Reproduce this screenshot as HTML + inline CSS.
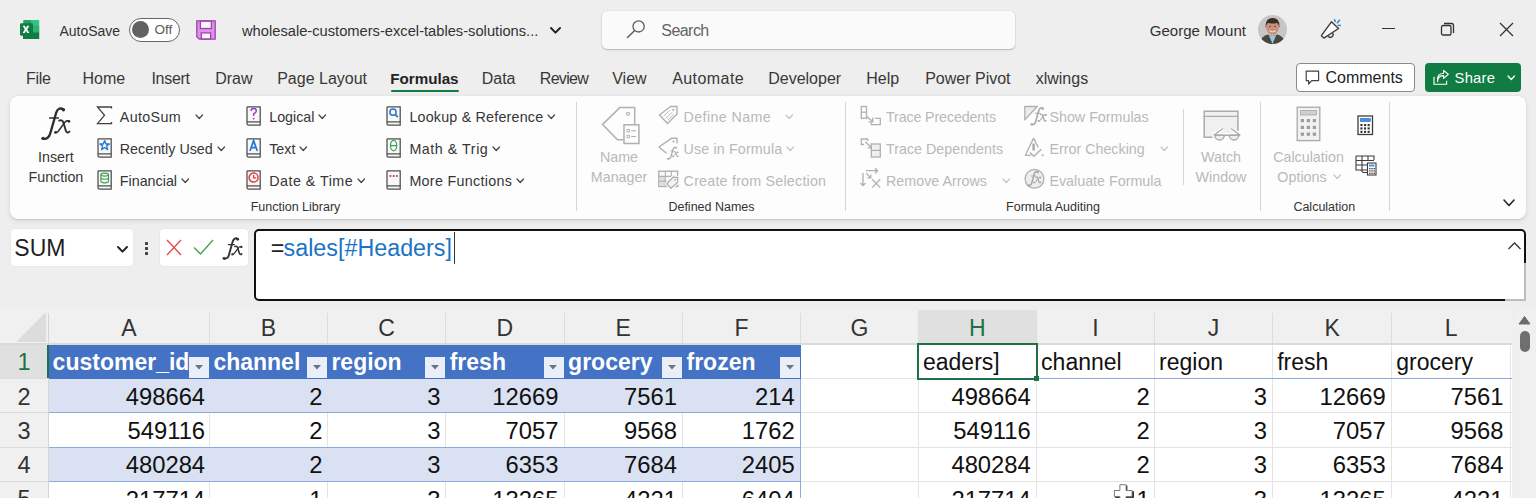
<!DOCTYPE html>
<html><head><meta charset="utf-8"><title>Excel</title>
<style>
html,body{margin:0;padding:0;}
body{width:1536px;height:498px;overflow:hidden;position:relative;background:#eeeeee;font-family:"Liberation Sans", sans-serif;}
.t{position:absolute;white-space:nowrap;}
.b{position:absolute;}
svg.b{overflow:visible;}
</style></head><body>
<svg class="b" style="left:20px;top:20px" width="20" height="20" viewBox="0 0 20 20">
<rect x="3.2" y="0" width="15.9" height="18.9" rx="1" fill="#21a366"/>
<rect x="11" y="0" width="8.1" height="6.3" fill="#33c481"/>
<rect x="3.2" y="12.6" width="15.9" height="6.3" fill="#185c37"/>
<rect x="3.2" y="6.3" width="15.9" height="6.3" fill="#21a366"/>
<rect x="11" y="6.3" width="8.1" height="6.3" fill="#2db374"/>
<rect x="3.2" y="12.6" width="15.9" height="6.3" fill="#107c41"/>
<rect x="0" y="3.3" width="13" height="12.4" rx="1.1" fill="#107c41"/>
<path d="M2.7 5.8 H4.9 L6 8.1 L7.1 5.8 H9.3 L7.2 9.4 L9.4 13 H7.2 L6 10.7 L4.8 13 H2.6 L4.8 9.4 Z" fill="#fff"/>
</svg>
<div class="t" style="top:21.85px;font-size:14px;line-height:18px;color:#333;left:59.4px;">AutoSave</div>
<div class="b" style="left:129px;top:17.5px;width:51px;height:24px;border:1.6px solid #666;border-radius:13px;background:#fff;box-sizing:border-box;"></div>
<div class="b" style="left:132px;top:21px;width:17px;height:17px;border-radius:50%;background:#626262;"></div>
<div class="t" style="top:21.42px;font-size:13.5px;line-height:17px;color:#5a5a5a;left:154.5px;">Off</div>
<svg class="b" style="left:196px;top:20px" width="20" height="20" viewBox="0 0 20 20">
<path d="M0.8 0.8 H19.2 V19.2 H3.3 L0.8 16.8 Z" fill="#d996e2" stroke="#a23fb3" stroke-width="1.3"/>
<rect x="4.4" y="1.2" width="11" height="7.3" fill="#f8f8f8" stroke="#a23fb3" stroke-width="1.3"/>
<rect x="5.3" y="12.9" width="9.3" height="6" fill="#f8f8f8" stroke="#a23fb3" stroke-width="1.3"/>
</svg>
<div class="t" style="top:21.61px;font-size:14.7px;line-height:18px;color:#333;left:242px;">wholesale-customers-excel-tables-solutions...</div>
<svg class="b" style="left:549.5px;top:26.7px" width="11" height="6.6" viewBox="0 0 11 6.6"><path d="M1 1 L5.5 5.6 L10 1" fill="none" stroke="#242424" stroke-width="2" stroke-linecap="round" stroke-linejoin="round"/></svg>
<div class="b" style="left:602px;top:10.5px;width:413px;height:38px;background:#fafafa;border-radius:5px;box-shadow:0 1px 1.5px rgba(0,0,0,0.22), 0 0 0 0.6px rgba(0,0,0,0.06);"></div>
<svg class="b" style="left:626px;top:19px" width="20" height="20" viewBox="0 0 20 20"><circle cx="12.6" cy="7.4" r="5.6" fill="none" stroke="#5a5a5a" stroke-width="1.3"/><path d="M8.6 11.4 L1.5 18.6" stroke="#5a5a5a" stroke-width="1.4" stroke-linecap="round"/></svg>
<div class="t" style="top:21.06px;font-size:16px;line-height:20px;color:#646464;letter-spacing:-0.55px;left:661.3px;">Search</div>
<div class="t" style="top:21.29px;font-size:15.05px;line-height:19px;color:#333;left:1149.8px;">George Mount</div>
<svg class="b" style="left:1258px;top:15px" width="29" height="29" viewBox="0 0 29 29">
<defs><clipPath id="av"><circle cx="14.5" cy="14.5" r="14.5"/></clipPath></defs>
<g clip-path="url(#av)">
<rect width="29" height="29" fill="#c6c6c6"/>
<path d="M1 30 Q3 21 10 19.5 L14.5 21 L19 19.5 Q26 21 28 30 Z" fill="#4b463c"/>
<path d="M10.5 19.5 L14.5 29 L18.5 19.5 Q14.5 22 10.5 19.5 Z" fill="#9cc2dd"/>
<ellipse cx="14.5" cy="12.2" rx="6.4" ry="7.6" fill="#c98f7d"/>
<path d="M7.6 13 Q7 3 14.5 3 Q22.2 3 21.4 13 Q20.5 8.5 19 8 Q14 9 9.8 8 Q8.3 9 7.6 13 Z" fill="#3a2c26"/>
<path d="M11.3 15.8 Q14.5 18 17.7 15.8" stroke="#f2e6e0" stroke-width="1" fill="none"/>
<ellipse cx="12" cy="11.6" rx="0.8" ry="0.5" fill="#4a2f28"/><ellipse cx="17" cy="11.6" rx="0.8" ry="0.5" fill="#4a2f28"/>
</g></svg>
<svg class="b" style="left:1320px;top:19px" width="22" height="21" viewBox="0 0 22 21">
<path d="M1.4 16.7 L11.4 2.8 L18.6 9.5 L3.9 19.1 Z" fill="#fafafa" stroke="#3d3d3d" stroke-width="1.4" stroke-linejoin="round"/>
<path d="M8.2 17.2 A2.4 2.4 0 1 0 12.6 14.2" fill="none" stroke="#3d3d3d" stroke-width="1.3"/>
<path d="M14.6 0.8 L15.2 2.6 M19.5 1.2 L17.4 3.8 M18.3 6.2 L20.2 6.6" stroke="#2a8ad6" stroke-width="1.5" stroke-linecap="round"/>
</svg>
<div class="b" style="left:1382px;top:28px;width:13px;height:1.3px;background:#333;"></div>
<svg class="b" style="left:1440px;top:22px" width="16" height="16" viewBox="0 0 16 16"><rect x="1.5" y="3.5" width="9.5" height="9.5" rx="1.6" fill="none" stroke="#333" stroke-width="1.3"/><path d="M4 1.5 H11.5 Q13.5 1.5 13.5 3.5 V11" fill="none" stroke="#333" stroke-width="1.3"/></svg>
<svg class="b" style="left:1499px;top:22px" width="15" height="15" viewBox="0 0 15 15"><path d="M1 1 L14 14 M14 1 L1 14" stroke="#333" stroke-width="1.3"/></svg>
<div class="t" style="top:68.56px;font-size:16px;line-height:20px;color:#383838;letter-spacing:-0.35px;left:26.099999999999998px;">File</div>
<div class="t" style="top:68.56px;font-size:16px;line-height:20px;color:#383838;left:82.5px;">Home</div>
<div class="t" style="top:68.56px;font-size:16px;line-height:20px;color:#383838;letter-spacing:-0.28px;left:151.39999999999998px;">Insert</div>
<div class="t" style="top:68.56px;font-size:16px;line-height:20px;color:#383838;left:215.2px;">Draw</div>
<div class="t" style="top:68.56px;font-size:16px;line-height:20px;color:#383838;left:277.2px;">Page Layout</div>
<div class="t" style="top:69.33px;font-size:15.2px;line-height:19px;color:#242424;font-weight:700;left:390.20000000000005px;">Formulas</div>
<div class="t" style="top:68.56px;font-size:16px;line-height:20px;color:#383838;left:481.7px;">Data</div>
<div class="t" style="top:68.56px;font-size:16px;line-height:20px;color:#383838;letter-spacing:-0.7px;left:539.8000000000001px;">Review</div>
<div class="t" style="top:68.56px;font-size:16px;line-height:20px;color:#383838;left:612.2px;">View</div>
<div class="t" style="top:68.56px;font-size:16px;line-height:20px;color:#383838;letter-spacing:0.43px;left:672.2px;">Automate</div>
<div class="t" style="top:68.56px;font-size:16px;line-height:20px;color:#383838;left:768.2px;">Developer</div>
<div class="t" style="top:68.56px;font-size:16px;line-height:20px;color:#383838;left:866.2px;">Help</div>
<div class="t" style="top:68.56px;font-size:16px;line-height:20px;color:#383838;left:925.2px;">Power Pivot</div>
<div class="t" style="top:68.56px;font-size:16px;line-height:20px;color:#383838;left:1035.7px;">xlwings</div>
<div class="b" style="left:390.6px;top:89.5px;width:68.6px;height:2.6px;background:#107c41;border-radius:1px;"></div>
<div class="b" style="left:1296px;top:63px;width:119px;height:29px;border:1px solid #8a8a8a;border-radius:4px;background:#fff;box-sizing:border-box;"></div>
<svg class="b" style="left:1305px;top:70px" width="15" height="16" viewBox="0 0 15 16"><path d="M1.2 1.2 H13.6 V10.6 H6.8 L3.6 14 V10.6 H1.2 Z" fill="none" stroke="#424242" stroke-width="1.2" stroke-linejoin="round"/></svg>
<div class="t" style="top:68.06px;font-size:16px;line-height:20px;color:#242424;left:1325.5px;">Comments</div>
<div class="b" style="left:1425px;top:63px;width:96px;height:29px;background:#107c41;border-radius:4px;"></div>
<svg class="b" style="left:1433px;top:70px" width="17" height="16" viewBox="0 0 17 16"><path d="M1 6.8 V14.2 H13.6 V10.8" fill="none" stroke="#fff" stroke-width="1.15"/><path d="M4.6 11.6 C4.6 7.2 7.2 5.6 10.6 5.6 V8.4 L15.3 4.3 L10.6 0.4 V3.2 C6.2 3.3 3.7 6.2 4.6 11.6 Z" fill="none" stroke="#fff" stroke-width="1.15" stroke-linejoin="round"/></svg>
<div class="t" style="top:69.47px;font-size:14.8px;line-height:18px;color:#fff;letter-spacing:0.2px;left:1454.6px;">Share</div>
<svg class="b" style="left:1506.55px;top:75.45px" width="8.5" height="5.5" viewBox="0 0 8.5 5.5"><path d="M1 1 L4.25 4.5 L7.5 1" fill="none" stroke="#fff" stroke-width="1.3" stroke-linecap="round" stroke-linejoin="round"/></svg>
<div class="b" style="left:10px;top:96px;width:1516px;height:123px;background:#fdfdfd;border-radius:8px;box-shadow:0 2px 6px rgba(0,0,0,0.08), 0 0.5px 1.2px rgba(0,0,0,0.12);"></div>
<svg class="b" style="left:40px;top:105px" width="32.0" height="36.0" viewBox="0 0 32.0 36.0"><g transform="scale(1.0)"><g fill="none" stroke="#2e2e2e" stroke-linecap="round">
<path d="M23.3 4.6 C21.2 2.6 17.6 3.2 16.2 7.6 L10.2 28.6 C9 32.6 6.2 34.6 3.2 33.6" stroke-width="2.3"/>
<path d="M9.6 13 H18.4" stroke-width="1.4"/>
<path d="M19.2 15.6 C21.4 14.6 22.8 15.6 23.4 17.8 L25.8 25.4 C26.4 27.6 27.8 28.2 29.4 26.6" stroke-width="1.9"/>
<path d="M28.8 16.2 C27.2 15 25.6 16.2 24 18.4 L19.2 25 C17.8 27 16.8 27.8 15.6 27.4" stroke-width="1.5"/>
</g>
<circle cx="23.4" cy="4.8" r="1.7" fill="#2e2e2e"/><circle cx="3" cy="33.4" r="1.7" fill="#2e2e2e"/>
<circle cx="28.9" cy="16.3" r="1.4" fill="#2e2e2e"/><circle cx="15.5" cy="27.4" r="1.4" fill="#2e2e2e"/></g></svg>
<div class="t" style="top:148.25px;font-size:14.3px;line-height:18px;color:#363636;left:-244.1px;width:600px;text-align:center;">Insert</div>
<div class="t" style="top:168.05px;font-size:14.3px;line-height:18px;color:#363636;left:-244.1px;width:600px;text-align:center;">Function</div>
<svg class="b" style="left:96px;top:106px" width="18" height="19" viewBox="0 0 18 19"><path d="M15.5 2.5 V1 H1.5 L8.5 9.3 L1.5 17.6 H15.5 V16" fill="none" stroke="#424242" stroke-width="1.3" stroke-linejoin="miter"/></svg>
<div class="t" style="top:107.55px;font-size:14.3px;line-height:18px;color:#363636;letter-spacing:0.33px;left:119.8px;">AutoSum</div>
<svg class="b" style="left:195.25px;top:113.75px" width="8.5" height="5.5" viewBox="0 0 8.5 5.5"><path d="M1 1 L4.25 4.5 L7.5 1" fill="none" stroke="#424242" stroke-width="1.2" stroke-linecap="round" stroke-linejoin="round"/></svg>
<div class="t" style="top:139.55px;font-size:14.3px;line-height:18px;color:#363636;left:119.8px;">Recently Used</div>
<svg class="b" style="left:216.55px;top:145.75px" width="8.5" height="5.5" viewBox="0 0 8.5 5.5"><path d="M1 1 L4.25 4.5 L7.5 1" fill="none" stroke="#424242" stroke-width="1.2" stroke-linecap="round" stroke-linejoin="round"/></svg>
<div class="t" style="top:171.55px;font-size:14.3px;line-height:18px;color:#363636;left:119.8px;">Financial</div>
<svg class="b" style="left:180.95px;top:177.75px" width="8.5" height="5.5" viewBox="0 0 8.5 5.5"><path d="M1 1 L4.25 4.5 L7.5 1" fill="none" stroke="#424242" stroke-width="1.2" stroke-linecap="round" stroke-linejoin="round"/></svg>
<svg class="b" style="left:97px;top:138px" width="16" height="20" viewBox="0 0 16 20"><path d="M1.6 0.9 H14.2 V19.1 H2.6 Q1 19.1 1 17.5 V1.5 Q1 0.9 1.6 0.9 Z" fill="#f8f8f8" stroke="#4d4d4d" stroke-width="1.25"/><path d="M1 15.9 H14.2" stroke="#4d4d4d" stroke-width="1.25"/><path d="M7.6 2.6 L8.9 6 H12.4 L9.6 8.1 L10.7 11.6 L7.6 9.5 L4.5 11.6 L5.6 8.1 L2.8 6 H6.3 Z" fill="none" stroke="#1e7ad6" stroke-width="1.3" stroke-linejoin="round"/></svg>
<svg class="b" style="left:97px;top:170px" width="16" height="20" viewBox="0 0 16 20"><path d="M1.6 0.9 H14.2 V19.1 H2.6 Q1 19.1 1 17.5 V1.5 Q1 0.9 1.6 0.9 Z" fill="#f8f8f8" stroke="#4d4d4d" stroke-width="1.25"/><path d="M1 15.9 H14.2" stroke="#4d4d4d" stroke-width="1.25"/><ellipse cx="7.7" cy="4.6" rx="3.8" ry="1.5" fill="none" stroke="#3a9e4f" stroke-width="1.1"/><path d="M3.9 4.6 V11.8 Q7.7 14 11.5 11.8 V4.6 M3.9 8.2 Q7.7 10.3 11.5 8.2" fill="none" stroke="#3a9e4f" stroke-width="1.1"/></svg>
<svg class="b" style="left:246px;top:106px" width="16" height="20" viewBox="0 0 16 20"><path d="M1.6 0.9 H14.2 V19.1 H2.6 Q1 19.1 1 17.5 V1.5 Q1 0.9 1.6 0.9 Z" fill="#f8f8f8" stroke="#4d4d4d" stroke-width="1.25"/><path d="M1 15.9 H14.2" stroke="#4d4d4d" stroke-width="1.25"/><path d="M5 5 Q5 2.4 7.6 2.4 Q10.3 2.4 10.3 4.8 Q10.3 6.6 7.6 7.9 V10" fill="none" stroke="#a53ec4" stroke-width="1.5"/><circle cx="7.6" cy="12.6" r="0.95" fill="#a53ec4"/></svg>
<svg class="b" style="left:246px;top:138px" width="16" height="20" viewBox="0 0 16 20"><path d="M1.6 0.9 H14.2 V19.1 H2.6 Q1 19.1 1 17.5 V1.5 Q1 0.9 1.6 0.9 Z" fill="#f8f8f8" stroke="#4d4d4d" stroke-width="1.25"/><path d="M1 15.9 H14.2" stroke="#4d4d4d" stroke-width="1.25"/><path d="M3.9 13 L7.6 2.6 L11.3 13 M5.2 9.6 H10" fill="none" stroke="#1e7ad6" stroke-width="1.7"/></svg>
<svg class="b" style="left:246px;top:170px" width="16" height="20" viewBox="0 0 16 20"><path d="M1.6 0.9 H14.2 V19.1 H2.6 Q1 19.1 1 17.5 V1.5 Q1 0.9 1.6 0.9 Z" fill="#f8f8f8" stroke="#4d4d4d" stroke-width="1.25"/><path d="M1 15.9 H14.2" stroke="#4d4d4d" stroke-width="1.25"/><circle cx="7.6" cy="7.6" r="4.5" fill="none" stroke="#e03b3b" stroke-width="1.5"/><path d="M7.6 4.9 V7.8 H10.2" fill="none" stroke="#e03b3b" stroke-width="1.3"/></svg>
<div class="t" style="top:107.55px;font-size:14.3px;line-height:18px;color:#363636;left:269.2px;">Logical</div>
<svg class="b" style="left:318.15px;top:113.75px" width="8.5" height="5.5" viewBox="0 0 8.5 5.5"><path d="M1 1 L4.25 4.5 L7.5 1" fill="none" stroke="#424242" stroke-width="1.2" stroke-linecap="round" stroke-linejoin="round"/></svg>
<div class="t" style="top:139.55px;font-size:14.3px;line-height:18px;color:#363636;left:269.2px;">Text</div>
<svg class="b" style="left:299.05px;top:145.75px" width="8.5" height="5.5" viewBox="0 0 8.5 5.5"><path d="M1 1 L4.25 4.5 L7.5 1" fill="none" stroke="#424242" stroke-width="1.2" stroke-linecap="round" stroke-linejoin="round"/></svg>
<div class="t" style="top:171.55px;font-size:14.3px;line-height:18px;color:#363636;letter-spacing:0.48px;left:269.2px;">Date &amp; Time</div>
<svg class="b" style="left:356.65px;top:177.75px" width="8.5" height="5.5" viewBox="0 0 8.5 5.5"><path d="M1 1 L4.25 4.5 L7.5 1" fill="none" stroke="#424242" stroke-width="1.2" stroke-linecap="round" stroke-linejoin="round"/></svg>
<svg class="b" style="left:386px;top:106px" width="16" height="20" viewBox="0 0 16 20"><path d="M1.6 0.9 H14.2 V19.1 H2.6 Q1 19.1 1 17.5 V1.5 Q1 0.9 1.6 0.9 Z" fill="#f8f8f8" stroke="#4d4d4d" stroke-width="1.25"/><path d="M1 15.9 H14.2" stroke="#4d4d4d" stroke-width="1.25"/><circle cx="7" cy="6.2" r="3.1" fill="none" stroke="#1e7ad6" stroke-width="1.5"/><path d="M9.3 8.5 L11.8 11.2" stroke="#1e7ad6" stroke-width="1.8"/></svg>
<svg class="b" style="left:386px;top:138px" width="16" height="20" viewBox="0 0 16 20"><path d="M1.6 0.9 H14.2 V19.1 H2.6 Q1 19.1 1 17.5 V1.5 Q1 0.9 1.6 0.9 Z" fill="#f8f8f8" stroke="#4d4d4d" stroke-width="1.25"/><path d="M1 15.9 H14.2" stroke="#4d4d4d" stroke-width="1.25"/><ellipse cx="7.6" cy="7.6" rx="3.1" ry="5.2" fill="none" stroke="#3a9e4f" stroke-width="1.2"/><path d="M4.5 7.6 H10.7" stroke="#3a9e4f" stroke-width="1.2"/></svg>
<svg class="b" style="left:386px;top:170px" width="16" height="20" viewBox="0 0 16 20"><path d="M1.6 0.9 H14.2 V19.1 H2.6 Q1 19.1 1 17.5 V1.5 Q1 0.9 1.6 0.9 Z" fill="#f8f8f8" stroke="#4d4d4d" stroke-width="1.25"/><path d="M1 15.9 H14.2" stroke="#4d4d4d" stroke-width="1.25"/><path d="M3.6 6 H5.3 M6.8 6 H8.5 M10 6 H11.7" stroke="#e03b3b" stroke-width="1.8"/></svg>
<div class="t" style="top:107.55px;font-size:14.3px;line-height:18px;color:#363636;letter-spacing:0.2px;left:409.4px;">Lookup &amp; Reference</div>
<svg class="b" style="left:547.25px;top:113.75px" width="8.5" height="5.5" viewBox="0 0 8.5 5.5"><path d="M1 1 L4.25 4.5 L7.5 1" fill="none" stroke="#424242" stroke-width="1.2" stroke-linecap="round" stroke-linejoin="round"/></svg>
<div class="t" style="top:139.55px;font-size:14.3px;line-height:18px;color:#363636;letter-spacing:0.53px;left:409.4px;">Math &amp; Trig</div>
<svg class="b" style="left:491.75px;top:145.75px" width="8.5" height="5.5" viewBox="0 0 8.5 5.5"><path d="M1 1 L4.25 4.5 L7.5 1" fill="none" stroke="#424242" stroke-width="1.2" stroke-linecap="round" stroke-linejoin="round"/></svg>
<div class="t" style="top:171.55px;font-size:14.3px;line-height:18px;color:#363636;letter-spacing:0.31px;left:409.4px;">More Functions</div>
<svg class="b" style="left:515.95px;top:177.75px" width="8.5" height="5.5" viewBox="0 0 8.5 5.5"><path d="M1 1 L4.25 4.5 L7.5 1" fill="none" stroke="#424242" stroke-width="1.2" stroke-linecap="round" stroke-linejoin="round"/></svg>
<div class="t" style="top:198.57px;font-size:12.5px;line-height:16px;color:#333;left:250.7px;">Function Library</div>
<div class="b" style="left:576px;top:102px;width:1px;height:109px;background:#d6d6d6;"></div>
<svg class="b" style="left:601px;top:106px" width="40" height="40" viewBox="0 0 40 40"><path d="M23 33.7 H16.5 L1.6 18.4 L18.8 1.6 H33.7 V18.6" fill="none" stroke="#b0b0b0" stroke-width="1.5" stroke-linejoin="round"/>
<circle cx="27" cy="7.7" r="1.5" fill="none" stroke="#b0b0b0" stroke-width="1.1"/>
<rect x="23" y="18.8" width="14.9" height="18.7" fill="#fdfdfd" stroke="#b0b0b0" stroke-width="1.5"/>
<rect x="26" y="23.5" width="2.4" height="2.4" fill="none" stroke="#b0b0b0" stroke-width="0.9"/><rect x="26" y="29.3" width="2.4" height="2.4" fill="none" stroke="#b0b0b0" stroke-width="0.9"/>
<path d="M30.2 24.7 H35 M30.2 30.5 H35" stroke="#b0b0b0" stroke-width="1.1"/></svg>
<div class="t" style="top:148.25px;font-size:14.3px;line-height:18px;color:#b9b9b9;left:319px;width:600px;text-align:center;">Name</div>
<div class="t" style="top:168.05px;font-size:14.3px;line-height:18px;color:#b9b9b9;left:319px;width:600px;text-align:center;">Manager</div>
<svg class="b" style="left:658px;top:105px" width="22" height="22" viewBox="0 0 22 22"><path d="M1.5 10 L12.5 1.5 H19 V9 L9.5 18.5 Z" fill="none" stroke="#b0b0b0" stroke-width="1.4" stroke-linejoin="round"/>
<circle cx="15.3" cy="4.8" r="1.1" fill="#b0b0b0"/>
<path d="M5.5 11.3 L12 5.2 M7.6 13.3 L14.4 7.3 M9.7 15.2 L15.6 9.6" stroke="#bdbdbd" stroke-width="1"/></svg>
<svg class="b" style="left:658px;top:137px" width="22" height="22" viewBox="0 0 22 22"><path d="M19 6.5 V1.2 H13.8 L0.9 10 L8.5 16.2" fill="none" stroke="#b0b0b0" stroke-width="1.4" stroke-linejoin="round"/>
<circle cx="15.5" cy="4.6" r="1.1" fill="#b0b0b0"/></svg>
<svg class="b" style="left:666.6px;top:145.6px" width="12.16" height="13.68" viewBox="0 0 12.16 13.68"><g transform="scale(0.38)"><g fill="none" stroke="#a9a9a9" stroke-linecap="round">
<path d="M23.3 4.6 C21.2 2.6 17.6 3.2 16.2 7.6 L10.2 28.6 C9 32.6 6.2 34.6 3.2 33.6" stroke-width="3.4499999999999997"/>
<path d="M9.6 13 H18.4" stroke-width="2.0999999999999996"/>
<path d="M19.2 15.6 C21.4 14.6 22.8 15.6 23.4 17.8 L25.8 25.4 C26.4 27.6 27.8 28.2 29.4 26.6" stroke-width="2.8499999999999996"/>
<path d="M28.8 16.2 C27.2 15 25.6 16.2 24 18.4 L19.2 25 C17.8 27 16.8 27.8 15.6 27.4" stroke-width="2.25"/>
</g>
<circle cx="23.4" cy="4.8" r="2.55" fill="#a9a9a9"/><circle cx="3" cy="33.4" r="2.55" fill="#a9a9a9"/>
<circle cx="28.9" cy="16.3" r="2.0999999999999996" fill="#a9a9a9"/><circle cx="15.5" cy="27.4" r="2.0999999999999996" fill="#a9a9a9"/></g></svg>
<svg class="b" style="left:658px;top:169px" width="22" height="22" viewBox="0 0 22 22"><rect x="0.8" y="2.2" width="18.8" height="15.3" fill="#fafafa" stroke="#b0b0b0" stroke-width="1.4"/>
<rect x="1.4" y="7.8" width="5.6" height="9.2" fill="#dedede"/>
<path d="M7.3 2.2 V17.5 M13.3 2.2 V17.5 M0.8 7.4 H19.6 M0.8 12.3 H19.6" stroke="#b0b0b0" stroke-width="1.1"/>
<path d="M8.7 14.7 L14.9 8.2 L19.8 8.5 L19.5 13.4 L13 19.3 Z" fill="#f4f4f4" stroke="#fdfdfd" stroke-width="3.5" stroke-linejoin="round"/>
<path d="M8.7 14.7 L14.9 8.2 L19.8 8.5 L19.5 13.4 L13 19.3 Z" fill="#f4f4f4" stroke="#b0b0b0" stroke-width="1.3" stroke-linejoin="round"/>
<circle cx="17" cy="10.8" r="0.9" fill="#b0b0b0"/></svg>
<div class="t" style="top:107.55px;font-size:14.3px;line-height:18px;color:#b9b9b9;letter-spacing:0.37px;left:683.6px;">Define Name</div>
<svg class="b" style="left:785.45px;top:113.75px" width="8.5" height="5.5" viewBox="0 0 8.5 5.5"><path d="M1 1 L4.25 4.5 L7.5 1" fill="none" stroke="#c4c4c4" stroke-width="1.2" stroke-linecap="round" stroke-linejoin="round"/></svg>
<div class="t" style="top:139.55px;font-size:14.3px;line-height:18px;color:#b9b9b9;letter-spacing:0.13px;left:683.6px;">Use in Formula</div>
<svg class="b" style="left:785.95px;top:145.75px" width="8.5" height="5.5" viewBox="0 0 8.5 5.5"><path d="M1 1 L4.25 4.5 L7.5 1" fill="none" stroke="#c4c4c4" stroke-width="1.2" stroke-linecap="round" stroke-linejoin="round"/></svg>
<div class="t" style="top:171.55px;font-size:14.3px;line-height:18px;color:#b9b9b9;letter-spacing:0.21px;left:683.6px;">Create from Selection</div>
<div class="t" style="top:198.57px;font-size:12.5px;line-height:16px;color:#333;left:411.5px;width:600px;text-align:center;">Defined Names</div>
<div class="b" style="left:845px;top:102px;width:1px;height:109px;background:#d6d6d6;"></div>
<svg class="b" style="left:859px;top:105px" width="24" height="22" viewBox="0 0 24 22"><rect x="2.3" y="1.5" width="5.2" height="11.8" fill="none" stroke="#b0b0b0" stroke-width="1.3"/><path d="M2.3 7.2 H7.5" stroke="#b0b0b0" stroke-width="1.2"/>
<path d="M7.5 11.2 L13.6 16.6 M13.8 12.6 V16.8 H9.6" fill="none" stroke="#b0b0b0" stroke-width="1.3"/>
<path d="M16 13.3 H21.3 V19.6 H12.3 V17.6" fill="none" stroke="#b0b0b0" stroke-width="1.3"/></svg>
<svg class="b" style="left:859px;top:137px" width="24" height="22" viewBox="0 0 24 22"><path d="M5 7.5 H2.3 V2 H8.6 V4" fill="none" stroke="#b0b0b0" stroke-width="1.3"/>
<path d="M6.3 4.8 L12.6 10.8 M12.8 6.6 V10.9 H8.6" fill="none" stroke="#b0b0b0" stroke-width="1.3"/>
<rect x="12.3" y="7" width="9" height="13" fill="#f0f0f0" stroke="#b0b0b0" stroke-width="1.3"/><path d="M12.3 13.4 H21.3" stroke="#b0b0b0" stroke-width="1.2"/></svg>
<svg class="b" style="left:859px;top:167px" width="24" height="24" viewBox="0 0 24 24"><path d="M4 6 V18.6 M1.5 16 L4 18.6 L6.5 16" fill="none" stroke="#b0b0b0" stroke-width="1.3"/>
<path d="M7 3.7 H18.6 M16 1.2 L18.6 3.7 L16 6.2" fill="none" stroke="#b0b0b0" stroke-width="1.3"/>
<path d="M7.2 6.2 L11.8 10.8 M11.8 7.4 V10.9 H8.4" fill="none" stroke="#b0b0b0" stroke-width="1.2"/>
<path d="M13.2 12.2 L21.2 20.6 M21.2 12.2 L13.2 20.6" stroke="#b0b0b0" stroke-width="1.3"/></svg>
<div class="t" style="top:107.55px;font-size:14.3px;line-height:18px;color:#b9b9b9;letter-spacing:-0.15px;left:886px;">Trace Precedents</div>
<div class="t" style="top:139.55px;font-size:14.3px;line-height:18px;color:#b9b9b9;left:886px;">Trace Dependents</div>
<div class="t" style="top:171.55px;font-size:14.3px;line-height:18px;color:#b9b9b9;left:886px;">Remove Arrows</div>
<svg class="b" style="left:1001.95px;top:177.75px" width="8.5" height="5.5" viewBox="0 0 8.5 5.5"><path d="M1 1 L4.25 4.5 L7.5 1" fill="none" stroke="#c4c4c4" stroke-width="1.2" stroke-linecap="round" stroke-linejoin="round"/></svg>
<svg class="b" style="left:1024px;top:105px" width="22" height="22" viewBox="0 0 22 22"><path d="M0.8 14.8 V1.5 H13.3 Z" fill="#ececec" stroke="#b0b0b0" stroke-width="1.3" stroke-linejoin="round"/></svg>
<svg class="b" style="left:1029.7px;top:105.8px" width="17.6" height="19.8" viewBox="0 0 17.6 19.8"><g transform="scale(0.55)"><g fill="none" stroke="#a9a9a9" stroke-linecap="round">
<path d="M23.3 4.6 C21.2 2.6 17.6 3.2 16.2 7.6 L10.2 28.6 C9 32.6 6.2 34.6 3.2 33.6" stroke-width="2.9899999999999998"/>
<path d="M9.6 13 H18.4" stroke-width="1.8199999999999998"/>
<path d="M19.2 15.6 C21.4 14.6 22.8 15.6 23.4 17.8 L25.8 25.4 C26.4 27.6 27.8 28.2 29.4 26.6" stroke-width="2.4699999999999998"/>
<path d="M28.8 16.2 C27.2 15 25.6 16.2 24 18.4 L19.2 25 C17.8 27 16.8 27.8 15.6 27.4" stroke-width="1.9500000000000002"/>
</g>
<circle cx="23.4" cy="4.8" r="2.21" fill="#a9a9a9"/><circle cx="3" cy="33.4" r="2.21" fill="#a9a9a9"/>
<circle cx="28.9" cy="16.3" r="1.8199999999999998" fill="#a9a9a9"/><circle cx="15.5" cy="27.4" r="1.8199999999999998" fill="#a9a9a9"/></g></svg>
<svg class="b" style="left:1024px;top:136px" width="22" height="23" viewBox="0 0 22 23"><path d="M9.6 2.1 L1.4 19.3 H7 M9.6 2.1 L14.2 11.5" fill="none" stroke="#b0b0b0" stroke-width="1.3" stroke-linejoin="round"/><path d="M9.6 7.5 V14.5" stroke="#a8a8a8" stroke-width="2.4"/><path d="M6 16.6 L9.8 20.3 L17.4 13.2" fill="none" stroke="#b0b0b0" stroke-width="1.4"/><circle cx="18.6" cy="19.2" r="1" fill="#b0b0b0"/></svg>
<svg class="b" style="left:1024px;top:168px" width="22" height="22" viewBox="0 0 22 22"><circle cx="10.5" cy="10.8" r="9.4" fill="#ededed" stroke="#b0b0b0" stroke-width="1.3"/></svg>
<svg class="b" style="left:1027.4px;top:170px" width="14.72" height="16.560000000000002" viewBox="0 0 14.72 16.560000000000002"><g transform="scale(0.46)"><g fill="none" stroke="#a6a6a6" stroke-linecap="round">
<path d="M23.3 4.6 C21.2 2.6 17.6 3.2 16.2 7.6 L10.2 28.6 C9 32.6 6.2 34.6 3.2 33.6" stroke-width="3.2199999999999998"/>
<path d="M9.6 13 H18.4" stroke-width="1.9599999999999997"/>
<path d="M19.2 15.6 C21.4 14.6 22.8 15.6 23.4 17.8 L25.8 25.4 C26.4 27.6 27.8 28.2 29.4 26.6" stroke-width="2.6599999999999997"/>
<path d="M28.8 16.2 C27.2 15 25.6 16.2 24 18.4 L19.2 25 C17.8 27 16.8 27.8 15.6 27.4" stroke-width="2.0999999999999996"/>
</g>
<circle cx="23.4" cy="4.8" r="2.38" fill="#a6a6a6"/><circle cx="3" cy="33.4" r="2.38" fill="#a6a6a6"/>
<circle cx="28.9" cy="16.3" r="1.9599999999999997" fill="#a6a6a6"/><circle cx="15.5" cy="27.4" r="1.9599999999999997" fill="#a6a6a6"/></g></svg>
<div class="t" style="top:107.55px;font-size:14.3px;line-height:18px;color:#b9b9b9;left:1049.4px;">Show Formulas</div>
<div class="t" style="top:139.55px;font-size:14.3px;line-height:18px;color:#b9b9b9;left:1049.4px;">Error Checking</div>
<svg class="b" style="left:1160.25px;top:145.75px" width="8.5" height="5.5" viewBox="0 0 8.5 5.5"><path d="M1 1 L4.25 4.5 L7.5 1" fill="none" stroke="#c4c4c4" stroke-width="1.2" stroke-linecap="round" stroke-linejoin="round"/></svg>
<div class="t" style="top:171.55px;font-size:14.3px;line-height:18px;color:#b9b9b9;left:1049.4px;">Evaluate Formula</div>
<div class="t" style="top:198.57px;font-size:12.5px;line-height:16px;color:#333;left:753px;width:600px;text-align:center;">Formula Auditing</div>
<div class="b" style="left:1183px;top:109px;width:1px;height:76px;background:#d6d6d6;"></div>
<svg class="b" style="left:1203px;top:110px" width="40" height="36" viewBox="0 0 40 36"><rect x="1.2" y="1.2" width="33.7" height="26" fill="#f0f0f0"/>
<path d="M9.3 27.2 H1.2 V1.2 H34.9 V20.9" fill="none" stroke="#ababab" stroke-width="1.5"/>
<path d="M1.2 6.3 H34.9" stroke="#ababab" stroke-width="1.3"/>
<g fill="#f2f2f2" stroke="#fdfdfd" stroke-width="4" stroke-linejoin="round">
<path d="M10.8 25.2 H37.3 M10.8 25.2 L20 18.5 M28 18.5 L37.3 25.2"/>
<path d="M11.7 25.2 A4.85 4.85 0 0 0 21.4 25.2 Z M26.2 25.2 A4.8 4.8 0 0 0 35.8 25.2 Z"/>
</g>
<g fill="#eeeeee" stroke="#ababab" stroke-width="1.4" stroke-linejoin="round">
<path d="M11.7 25.2 A4.85 4.85 0 0 0 21.4 25.2 Z M26.2 25.2 A4.8 4.8 0 0 0 35.8 25.2 Z"/>
<path d="M10.8 25.2 H37.3 M10.8 25.2 L20 18.5 M28 18.5 L37.3 25.2" fill="none"/>
</g></svg>
<div class="t" style="top:148.25px;font-size:14.3px;line-height:18px;color:#b9b9b9;left:921px;width:600px;text-align:center;">Watch</div>
<div class="t" style="top:168.05px;font-size:14.3px;line-height:18px;color:#b9b9b9;left:921px;width:600px;text-align:center;">Window</div>
<div class="b" style="left:1259.5px;top:102px;width:1px;height:109px;background:#d6d6d6;"></div>
<svg class="b" style="left:1296px;top:106px" width="26" height="36" viewBox="0 0 26 36"><rect x="1.2" y="1.2" width="22.6" height="33.4" fill="#f1f1f1" stroke="#a9a9a9" stroke-width="1.3"/>
<rect x="4.5" y="4.5" width="16" height="4.5" fill="#cfcfcf" stroke="#a9a9a9" stroke-width="0.8"/>
<rect x="4.8" y="13.0" width="3.2" height="3.2" fill="#9d9d9d"/><rect x="10.8" y="13.0" width="3.2" height="3.2" fill="#9d9d9d"/><rect x="16.8" y="13.0" width="3.2" height="3.2" fill="#9d9d9d"/><rect x="4.8" y="19.8" width="3.2" height="3.2" fill="#9d9d9d"/><rect x="10.8" y="19.8" width="3.2" height="3.2" fill="#9d9d9d"/><rect x="16.8" y="19.8" width="3.2" height="3.2" fill="#9d9d9d"/><rect x="4.8" y="26.6" width="3.2" height="3.2" fill="#9d9d9d"/><rect x="10.8" y="26.6" width="3.2" height="3.2" fill="#9d9d9d"/><rect x="16.8" y="26.6" width="3.2" height="3.2" fill="#9d9d9d"/></svg>
<div class="t" style="top:148.25px;font-size:14.3px;line-height:18px;color:#b9b9b9;left:1008.5px;width:600px;text-align:center;">Calculation</div>
<div class="t" style="top:168.05px;font-size:14.3px;line-height:18px;color:#b9b9b9;left:1002px;width:600px;text-align:center;">Options</div>
<svg class="b" style="left:1332.95px;top:174.25px" width="8.5" height="5.5" viewBox="0 0 8.5 5.5"><path d="M1 1 L4.25 4.5 L7.5 1" fill="none" stroke="#c4c4c4" stroke-width="1.2" stroke-linecap="round" stroke-linejoin="round"/></svg>
<svg class="b" style="left:1357px;top:115px" width="17" height="21" viewBox="0 0 17 21"><rect x="1" y="1" width="14.5" height="18.5" fill="#fff" stroke="#3d3d3d" stroke-width="1.3"/>
<rect x="3.3" y="3.3" width="10" height="3.3" fill="#4a90e2" stroke="#2f6fb8" stroke-width="0.6"/>
<rect x="3.4" y="9.0" width="2.1" height="2.1" fill="#333"/><rect x="7.0" y="9.0" width="2.1" height="2.1" fill="#333"/><rect x="10.6" y="9.0" width="2.1" height="2.1" fill="#333"/><rect x="3.4" y="12.4" width="2.1" height="2.1" fill="#333"/><rect x="7.0" y="12.4" width="2.1" height="2.1" fill="#333"/><rect x="10.6" y="12.4" width="2.1" height="2.1" fill="#333"/><rect x="3.4" y="15.8" width="2.1" height="2.1" fill="#333"/><rect x="7.0" y="15.8" width="2.1" height="2.1" fill="#333"/><rect x="10.6" y="15.8" width="2.1" height="2.1" fill="#333"/></svg>
<svg class="b" style="left:1355px;top:155px" width="22" height="21" viewBox="0 0 22 21"><path d="M1 1 H19 V5 M1 1 V15 H6 L8 17.5 H12 M1 5.5 H19 M1 10 H12 M1 15 H12 M7 1 V15 M13 1 V5.5" fill="none" stroke="#3d3d3d" stroke-width="1.1"/>
<rect x="12.5" y="8" width="8.5" height="12" fill="#fff" stroke="#3d3d3d" stroke-width="1.1"/>
<rect x="14" y="9.5" width="5.5" height="2" fill="#4a90e2"/>
<rect x="14.2" y="13.0" width="1.3" height="1.3" fill="#333"/><rect x="16.4" y="13.0" width="1.3" height="1.3" fill="#333"/><rect x="18.6" y="13.0" width="1.3" height="1.3" fill="#333"/><rect x="14.2" y="15.3" width="1.3" height="1.3" fill="#333"/><rect x="16.4" y="15.3" width="1.3" height="1.3" fill="#333"/><rect x="18.6" y="15.3" width="1.3" height="1.3" fill="#333"/><rect x="14.2" y="17.6" width="1.3" height="1.3" fill="#333"/><rect x="16.4" y="17.6" width="1.3" height="1.3" fill="#333"/><rect x="18.6" y="17.6" width="1.3" height="1.3" fill="#333"/></svg>
<div class="t" style="top:198.57px;font-size:12.5px;line-height:16px;color:#333;left:1024.3px;width:600px;text-align:center;">Calculation</div>
<div class="b" style="left:1389px;top:102px;width:1px;height:109px;background:#d6d6d6;"></div>
<svg class="b" style="left:1502.8px;top:198.75px" width="12" height="7.5" viewBox="0 0 12 7.5"><path d="M1 1 L6.0 6.5 L11 1" fill="none" stroke="#242424" stroke-width="1.6" stroke-linecap="round" stroke-linejoin="round"/></svg>
<div class="b" style="left:11px;top:229px;width:122px;height:37px;background:#fff;border-radius:4px;box-shadow:0 0 0 0.5px rgba(0,0,0,0.05);"></div>
<div class="t" style="top:233.73px;font-size:23px;line-height:29px;color:#1f1f1f;left:14.3px;">SUM</div>
<svg class="b" style="left:116.5px;top:245.7px" width="11" height="6.6" viewBox="0 0 11 6.6"><path d="M1 1 L5.5 5.6 L10 1" fill="none" stroke="#242424" stroke-width="2" stroke-linecap="round" stroke-linejoin="round"/></svg>
<div class="b" style="left:145px;top:241.5px;width:3px;height:3px;background:#424242;border-radius:0.5px;"></div>
<div class="b" style="left:145px;top:246.5px;width:3px;height:3px;background:#424242;border-radius:0.5px;"></div>
<div class="b" style="left:145px;top:251.5px;width:3px;height:3px;background:#424242;border-radius:0.5px;"></div>
<div class="b" style="left:160px;top:229px;width:88px;height:37px;background:#fff;border-radius:4px;box-shadow:0 0 0 0.5px rgba(0,0,0,0.05);"></div>
<svg class="b" style="left:166px;top:239px" width="16" height="17" viewBox="0 0 16 17"><path d="M1 1 L15 16 M15 1 L1 16" stroke="#e24a4a" stroke-width="1.3"/></svg>
<svg class="b" style="left:193px;top:239px" width="21" height="16" viewBox="0 0 21 16"><path d="M1 8.5 L7.5 15 L20 1" fill="none" stroke="#3fa34d" stroke-width="1.3"/></svg>
<svg class="b" style="left:222.2px;top:236px" width="21.44" height="24.12" viewBox="0 0 21.44 24.12"><g transform="scale(0.67)"><g fill="none" stroke="#333" stroke-linecap="round">
<path d="M23.3 4.6 C21.2 2.6 17.6 3.2 16.2 7.6 L10.2 28.6 C9 32.6 6.2 34.6 3.2 33.6" stroke-width="2.875"/>
<path d="M9.6 13 H18.4" stroke-width="1.75"/>
<path d="M19.2 15.6 C21.4 14.6 22.8 15.6 23.4 17.8 L25.8 25.4 C26.4 27.6 27.8 28.2 29.4 26.6" stroke-width="2.375"/>
<path d="M28.8 16.2 C27.2 15 25.6 16.2 24 18.4 L19.2 25 C17.8 27 16.8 27.8 15.6 27.4" stroke-width="1.875"/>
</g>
<circle cx="23.4" cy="4.8" r="2.125" fill="#333"/><circle cx="3" cy="33.4" r="2.125" fill="#333"/>
<circle cx="28.9" cy="16.3" r="1.75" fill="#333"/><circle cx="15.5" cy="27.4" r="1.75" fill="#333"/></g></svg>
<div class="b" style="left:254px;top:229px;width:1272px;height:71.5px;border:2px solid #111;border-radius:5px 5px 0 5px;background:#fff;box-sizing:border-box;"></div>
<div class="b" style="left:1505px;top:298.5px;width:21px;height:2px;background:#bdbdbd;"></div>
<div class="b" style="left:1524px;top:263px;width:2px;height:37.5px;background:#bdbdbd;"></div>
<div class="t" style="top:234.03px;font-size:23.3px;line-height:29px;color:#222;left:270.8px;">=</div>
<div class="t" style="top:234.03px;font-size:23.3px;line-height:29px;color:#1a73c6;left:283.6px;">sales[#Headers]</div>
<div class="b" style="left:454px;top:232px;width:1px;height:32px;background:#333;"></div>
<svg class="b" style="left:1507px;top:241px" width="15" height="10" viewBox="0 0 15 10"><path d="M1.5 8 L7.5 2 L13.5 8" fill="none" stroke="#333" stroke-width="1.3"/></svg>
<div class="b" style="left:0px;top:310px;width:1512px;height:33px;background:#f0f0f0;"></div>
<div class="b" style="left:0px;top:345px;width:48px;height:153px;background:#f0f0f0;"></div>
<div class="b" style="left:49px;top:345px;width:1463px;height:153px;background:#fff;"></div>
<svg class="b" style="left:16px;top:312px" width="31" height="30" viewBox="0 0 31 30"><path d="M30 0 V30 H0 Z" fill="#dcdcdc"/></svg>
<div class="b" style="left:918px;top:310px;width:118.5px;height:33px;background:#e0e0e0;"></div>
<div class="b" style="left:0px;top:345px;width:47px;height:33px;background:#e0e0e0;"></div>
<div class="t" style="top:313.73px;font-size:23px;line-height:29px;color:#333;left:-171.1px;width:600px;text-align:center;">A</div>
<div class="b" style="left:208.8px;top:313px;width:1px;height:30px;background:#dddddd;"></div>
<div class="t" style="top:313.73px;font-size:23px;line-height:29px;color:#333;left:-31.69999999999999px;width:600px;text-align:center;">B</div>
<div class="b" style="left:326.8px;top:313px;width:1px;height:30px;background:#dddddd;"></div>
<div class="t" style="top:313.73px;font-size:23px;line-height:29px;color:#333;left:86.45000000000005px;width:600px;text-align:center;">C</div>
<div class="b" style="left:445.1px;top:313px;width:1px;height:30px;background:#dddddd;"></div>
<div class="t" style="top:313.73px;font-size:23px;line-height:29px;color:#333;left:204.8px;width:600px;text-align:center;">D</div>
<div class="b" style="left:563.5px;top:313px;width:1px;height:30px;background:#dddddd;"></div>
<div class="t" style="top:313.73px;font-size:23px;line-height:29px;color:#333;left:323.20000000000005px;width:600px;text-align:center;">E</div>
<div class="b" style="left:681.9px;top:313px;width:1px;height:30px;background:#dddddd;"></div>
<div class="t" style="top:313.73px;font-size:23px;line-height:29px;color:#333;left:441.45000000000005px;width:600px;text-align:center;">F</div>
<div class="b" style="left:800.0px;top:313px;width:1px;height:30px;background:#dddddd;"></div>
<div class="t" style="top:313.73px;font-size:23px;line-height:29px;color:#333;left:559.35px;width:600px;text-align:center;">G</div>
<div class="b" style="left:917.7px;top:313px;width:1px;height:30px;background:#dddddd;"></div>
<div class="t" style="top:313.73px;font-size:23px;line-height:29px;color:#1e7145;left:677.35px;width:600px;text-align:center;">H</div>
<div class="b" style="left:1036.0px;top:313px;width:1px;height:30px;background:#dddddd;"></div>
<div class="t" style="top:313.73px;font-size:23px;line-height:29px;color:#333;left:795.5px;width:600px;text-align:center;">I</div>
<div class="b" style="left:1154.0px;top:313px;width:1px;height:30px;background:#dddddd;"></div>
<div class="t" style="top:313.73px;font-size:23px;line-height:29px;color:#333;left:913.55px;width:600px;text-align:center;">J</div>
<div class="b" style="left:1272.1px;top:313px;width:1px;height:30px;background:#dddddd;"></div>
<div class="t" style="top:313.73px;font-size:23px;line-height:29px;color:#333;left:1032.15px;width:600px;text-align:center;">K</div>
<div class="b" style="left:1391.2px;top:313px;width:1px;height:30px;background:#dddddd;"></div>
<div class="t" style="top:313.73px;font-size:23px;line-height:29px;color:#333;left:1151.1px;width:600px;text-align:center;">L</div>
<div class="b" style="left:0px;top:343px;width:1512px;height:2px;background:#dadada;"></div>
<div class="b" style="left:48px;top:313px;width:1px;height:185px;background:#d4d4d4;"></div>
<div class="t" style="top:348.16px;font-size:23.5px;line-height:29px;color:#1e7145;left:-276px;width:600px;text-align:center;">1</div>
<div class="t" style="top:382.66px;font-size:23.5px;line-height:29px;color:#333;left:-276px;width:600px;text-align:center;">2</div>
<div class="t" style="top:416.86px;font-size:23.5px;line-height:29px;color:#333;left:-276px;width:600px;text-align:center;">3</div>
<div class="t" style="top:451.26px;font-size:23.5px;line-height:29px;color:#333;left:-276px;width:600px;text-align:center;">4</div>
<div class="t" style="top:485.46px;font-size:23.5px;line-height:29px;color:#333;left:-276px;width:600px;text-align:center;">5</div>
<div class="b" style="left:0px;top:378px;width:48px;height:1px;background:#dcdcdc;"></div>
<div class="b" style="left:0px;top:412px;width:48px;height:1px;background:#dcdcdc;"></div>
<div class="b" style="left:0px;top:447px;width:48px;height:1px;background:#dcdcdc;"></div>
<div class="b" style="left:0px;top:481px;width:48px;height:1px;background:#dcdcdc;"></div>
<div class="b" style="left:47px;top:345px;width:2px;height:33px;background:#1e7145;"></div>
<div class="b" style="left:208.8px;top:345px;width:1px;height:153px;background:#e4e4e4;"></div>
<div class="b" style="left:326.8px;top:345px;width:1px;height:153px;background:#e4e4e4;"></div>
<div class="b" style="left:445.1px;top:345px;width:1px;height:153px;background:#e4e4e4;"></div>
<div class="b" style="left:563.5px;top:345px;width:1px;height:153px;background:#e4e4e4;"></div>
<div class="b" style="left:681.9px;top:345px;width:1px;height:153px;background:#e4e4e4;"></div>
<div class="b" style="left:800.0px;top:345px;width:1px;height:153px;background:#e4e4e4;"></div>
<div class="b" style="left:917.7px;top:345px;width:1px;height:153px;background:#e4e4e4;"></div>
<div class="b" style="left:1036.0px;top:345px;width:1px;height:153px;background:#e4e4e4;"></div>
<div class="b" style="left:1154.0px;top:345px;width:1px;height:153px;background:#e4e4e4;"></div>
<div class="b" style="left:1272.1px;top:345px;width:1px;height:153px;background:#e4e4e4;"></div>
<div class="b" style="left:1391.2px;top:345px;width:1px;height:153px;background:#e4e4e4;"></div>
<div class="b" style="left:1510.0px;top:345px;width:1px;height:153px;background:#e4e4e4;"></div>
<div class="b" style="left:49px;top:378px;width:1463px;height:1px;background:#e4e4e4;"></div>
<div class="b" style="left:49px;top:412px;width:1463px;height:1px;background:#e4e4e4;"></div>
<div class="b" style="left:49px;top:447px;width:1463px;height:1px;background:#e4e4e4;"></div>
<div class="b" style="left:49px;top:481px;width:1463px;height:1px;background:#e4e4e4;"></div>
<div class="b" style="left:49px;top:345px;width:752px;height:34px;background:#4472c4;"></div>
<div class="b" style="left:49px;top:413px;width:752px;height:34px;background:#d9e1f2;"></div>
<div class="b" style="left:49px;top:379px;width:752px;height:33px;background:#d9e1f2;"></div>
<div class="b" style="left:49px;top:448px;width:752px;height:33px;background:#d9e1f2;"></div>
<div class="b" style="left:49px;top:413px;width:752px;height:34px;background:#fff;"></div>
<div class="b" style="left:208.8px;top:413px;width:1px;height:34px;background:#e4e4e4;"></div>
<div class="b" style="left:208.8px;top:482px;width:1px;height:16px;background:#e4e4e4;"></div>
<div class="b" style="left:326.8px;top:413px;width:1px;height:34px;background:#e4e4e4;"></div>
<div class="b" style="left:326.8px;top:482px;width:1px;height:16px;background:#e4e4e4;"></div>
<div class="b" style="left:445.1px;top:413px;width:1px;height:34px;background:#e4e4e4;"></div>
<div class="b" style="left:445.1px;top:482px;width:1px;height:16px;background:#e4e4e4;"></div>
<div class="b" style="left:563.5px;top:413px;width:1px;height:34px;background:#e4e4e4;"></div>
<div class="b" style="left:563.5px;top:482px;width:1px;height:16px;background:#e4e4e4;"></div>
<div class="b" style="left:681.9px;top:413px;width:1px;height:34px;background:#e4e4e4;"></div>
<div class="b" style="left:681.9px;top:482px;width:1px;height:16px;background:#e4e4e4;"></div>
<div class="b" style="left:49px;top:412px;width:752px;height:1px;background:#8eaadc;"></div>
<div class="b" style="left:49px;top:447px;width:752px;height:1px;background:#8eaadc;"></div>
<div class="b" style="left:49px;top:481px;width:752px;height:1px;background:#8eaadc;"></div>
<div class="b" style="left:49px;top:378px;width:752px;height:1px;background:#4472c4;"></div>
<div class="b" style="left:800px;top:345px;width:1px;height:34px;background:#4472c4;"></div>
<div class="b" style="left:800px;top:379px;width:1px;height:119px;background:#8eaadc;"></div>
<div class="t" style="top:348.23px;font-size:23px;line-height:29px;color:#fff;font-weight:700;left:52.6px;">customer_id</div>
<div class="b" style="left:188.8px;top:357px;width:20px;height:20.5px;background:#eaeef8;"></div>
<svg class="b" style="left:194.5px;top:365px" width="8" height="5" viewBox="0 0 8 5"><path d="M0 0 H8 L4 4.5 Z" fill="#6e7380"/></svg>
<div class="t" style="top:348.23px;font-size:23px;line-height:29px;color:#fff;font-weight:700;left:213.4px;">channel</div>
<div class="b" style="left:306.8px;top:357px;width:20px;height:20.5px;background:#eaeef8;"></div>
<svg class="b" style="left:312.5px;top:365px" width="8" height="5" viewBox="0 0 8 5"><path d="M0 0 H8 L4 4.5 Z" fill="#6e7380"/></svg>
<div class="t" style="top:348.23px;font-size:23px;line-height:29px;color:#fff;font-weight:700;left:331.40000000000003px;">region</div>
<div class="b" style="left:425.1px;top:357px;width:20px;height:20.5px;background:#eaeef8;"></div>
<svg class="b" style="left:430.8px;top:365px" width="8" height="5" viewBox="0 0 8 5"><path d="M0 0 H8 L4 4.5 Z" fill="#6e7380"/></svg>
<div class="t" style="top:348.23px;font-size:23px;line-height:29px;color:#fff;font-weight:700;left:449.70000000000005px;">fresh</div>
<div class="b" style="left:543.5px;top:357px;width:20px;height:20.5px;background:#eaeef8;"></div>
<svg class="b" style="left:549.2px;top:365px" width="8" height="5" viewBox="0 0 8 5"><path d="M0 0 H8 L4 4.5 Z" fill="#6e7380"/></svg>
<div class="t" style="top:348.23px;font-size:23px;line-height:29px;color:#fff;font-weight:700;left:568.1px;">grocery</div>
<div class="b" style="left:661.9px;top:357px;width:20px;height:20.5px;background:#eaeef8;"></div>
<svg class="b" style="left:667.6px;top:365px" width="8" height="5" viewBox="0 0 8 5"><path d="M0 0 H8 L4 4.5 Z" fill="#6e7380"/></svg>
<div class="t" style="top:348.23px;font-size:23px;line-height:29px;color:#fff;font-weight:700;left:686.5px;">frozen</div>
<div class="b" style="left:780.0px;top:357px;width:20px;height:20.5px;background:#eaeef8;"></div>
<svg class="b" style="left:785.7px;top:365px" width="8" height="5" viewBox="0 0 8 5"><path d="M0 0 H8 L4 4.5 Z" fill="#6e7380"/></svg>
<div class="t" style="top:381.75px;font-size:23.8px;line-height:30px;color:#111;right:1330.9px;">498664</div>
<div class="t" style="top:381.75px;font-size:23.8px;line-height:30px;color:#111;right:505.20000000000005px;">498664</div>
<div class="t" style="top:381.75px;font-size:23.8px;line-height:30px;color:#111;right:1213.5px;">2</div>
<div class="t" style="top:381.75px;font-size:23.8px;line-height:30px;color:#111;right:386.20000000000005px;">2</div>
<div class="t" style="top:381.75px;font-size:23.8px;line-height:30px;color:#111;right:1095.4px;">3</div>
<div class="t" style="top:381.75px;font-size:23.8px;line-height:30px;color:#111;right:269.10000000000014px;">3</div>
<div class="t" style="top:381.75px;font-size:23.8px;line-height:30px;color:#111;right:977.5px;">12669</div>
<div class="t" style="top:381.75px;font-size:23.8px;line-height:30px;color:#111;right:150.29999999999995px;">12669</div>
<div class="t" style="top:381.75px;font-size:23.8px;line-height:30px;color:#111;right:859.0px;">7561</div>
<div class="t" style="top:381.75px;font-size:23.8px;line-height:30px;color:#111;right:32.59999999999991px;">7561</div>
<div class="t" style="top:381.75px;font-size:23.8px;line-height:30px;color:#111;right:741.3px;">214</div>
<div class="t" style="top:415.95px;font-size:23.8px;line-height:30px;color:#111;right:1330.9px;">549116</div>
<div class="t" style="top:415.95px;font-size:23.8px;line-height:30px;color:#111;right:505.20000000000005px;">549116</div>
<div class="t" style="top:415.95px;font-size:23.8px;line-height:30px;color:#111;right:1213.5px;">2</div>
<div class="t" style="top:415.95px;font-size:23.8px;line-height:30px;color:#111;right:386.20000000000005px;">2</div>
<div class="t" style="top:415.95px;font-size:23.8px;line-height:30px;color:#111;right:1095.4px;">3</div>
<div class="t" style="top:415.95px;font-size:23.8px;line-height:30px;color:#111;right:269.10000000000014px;">3</div>
<div class="t" style="top:415.95px;font-size:23.8px;line-height:30px;color:#111;right:977.5px;">7057</div>
<div class="t" style="top:415.95px;font-size:23.8px;line-height:30px;color:#111;right:150.29999999999995px;">7057</div>
<div class="t" style="top:415.95px;font-size:23.8px;line-height:30px;color:#111;right:859.0px;">9568</div>
<div class="t" style="top:415.95px;font-size:23.8px;line-height:30px;color:#111;right:32.59999999999991px;">9568</div>
<div class="t" style="top:415.95px;font-size:23.8px;line-height:30px;color:#111;right:741.3px;">1762</div>
<div class="t" style="top:450.35px;font-size:23.8px;line-height:30px;color:#111;right:1330.9px;">480284</div>
<div class="t" style="top:450.35px;font-size:23.8px;line-height:30px;color:#111;right:505.20000000000005px;">480284</div>
<div class="t" style="top:450.35px;font-size:23.8px;line-height:30px;color:#111;right:1213.5px;">2</div>
<div class="t" style="top:450.35px;font-size:23.8px;line-height:30px;color:#111;right:386.20000000000005px;">2</div>
<div class="t" style="top:450.35px;font-size:23.8px;line-height:30px;color:#111;right:1095.4px;">3</div>
<div class="t" style="top:450.35px;font-size:23.8px;line-height:30px;color:#111;right:269.10000000000014px;">3</div>
<div class="t" style="top:450.35px;font-size:23.8px;line-height:30px;color:#111;right:977.5px;">6353</div>
<div class="t" style="top:450.35px;font-size:23.8px;line-height:30px;color:#111;right:150.29999999999995px;">6353</div>
<div class="t" style="top:450.35px;font-size:23.8px;line-height:30px;color:#111;right:859.0px;">7684</div>
<div class="t" style="top:450.35px;font-size:23.8px;line-height:30px;color:#111;right:32.59999999999991px;">7684</div>
<div class="t" style="top:450.35px;font-size:23.8px;line-height:30px;color:#111;right:741.3px;">2405</div>
<div class="t" style="top:484.55px;font-size:23.8px;line-height:30px;color:#111;right:1330.9px;">217714</div>
<div class="t" style="top:484.55px;font-size:23.8px;line-height:30px;color:#111;right:505.20000000000005px;">217714</div>
<div class="t" style="top:484.55px;font-size:23.8px;line-height:30px;color:#111;right:1213.5px;">1</div>
<div class="t" style="top:484.55px;font-size:23.8px;line-height:30px;color:#111;right:386.20000000000005px;">1</div>
<div class="t" style="top:484.55px;font-size:23.8px;line-height:30px;color:#111;right:1095.4px;">3</div>
<div class="t" style="top:484.55px;font-size:23.8px;line-height:30px;color:#111;right:269.10000000000014px;">3</div>
<div class="t" style="top:484.55px;font-size:23.8px;line-height:30px;color:#111;right:977.5px;">13265</div>
<div class="t" style="top:484.55px;font-size:23.8px;line-height:30px;color:#111;right:150.29999999999995px;">13265</div>
<div class="t" style="top:484.55px;font-size:23.8px;line-height:30px;color:#111;right:859.0px;">4221</div>
<div class="t" style="top:484.55px;font-size:23.8px;line-height:30px;color:#111;right:32.59999999999991px;">4221</div>
<div class="t" style="top:484.55px;font-size:23.8px;line-height:30px;color:#111;right:741.3px;">6404</div>
<div class="t" style="top:348.23px;font-size:23px;line-height:29px;color:#111;left:923px;">eaders]</div>
<div class="t" style="top:348.23px;font-size:23px;line-height:29px;color:#111;left:1041.1px;">channel</div>
<div class="t" style="top:348.23px;font-size:23px;line-height:29px;color:#111;left:1159.1px;">region</div>
<div class="t" style="top:348.23px;font-size:23px;line-height:29px;color:#111;left:1277.1999999999998px;">fresh</div>
<div class="t" style="top:348.23px;font-size:23px;line-height:29px;color:#111;left:1396.3px;">grocery</div>
<div class="b" style="left:1038px;top:378px;width:474px;height:1px;background:#8eaadc;"></div>
<div class="b" style="left:917px;top:343px;width:121px;height:37px;border:2px solid #1e7145;box-sizing:border-box;"></div>
<div class="b" style="left:1033.5px;top:375.5px;width:5.5px;height:5.5px;background:#1e7145;"></div>
<svg class="b" style="left:1113px;top:483px" width="24" height="16" viewBox="0 0 24 16"><path d="M7.6 2.4 H14.3 V8.2 H20.8 V14.8 H14.3 V21 H7.6 V14.8 H2.1 V8.2 H7.6 Z" fill="#000"/><path d="M6.9 1.7 H13.1 V7.5 H19.1 V13.6 H13.1 V20 H6.9 V13.6 H1.4 V7.5 H6.9 Z" fill="#fff" stroke="#7a7a7a" stroke-width="1"/></svg>
<div class="b" style="left:1513px;top:310px;width:23px;height:188px;background:#f0f0f0;border-radius:8px 0 0 0;"></div>
<svg class="b" style="left:1518px;top:315px" width="13" height="10" viewBox="0 0 13 10"><path d="M1 9 L6.5 1.5 L12 9 Z" fill="#6b6b6b" stroke="#6b6b6b" stroke-width="1" stroke-linejoin="round"/></svg>
<div class="b" style="left:1519.5px;top:331px;width:10px;height:21px;background:#6f6f6f;border-radius:5px;"></div>
</body></html>
